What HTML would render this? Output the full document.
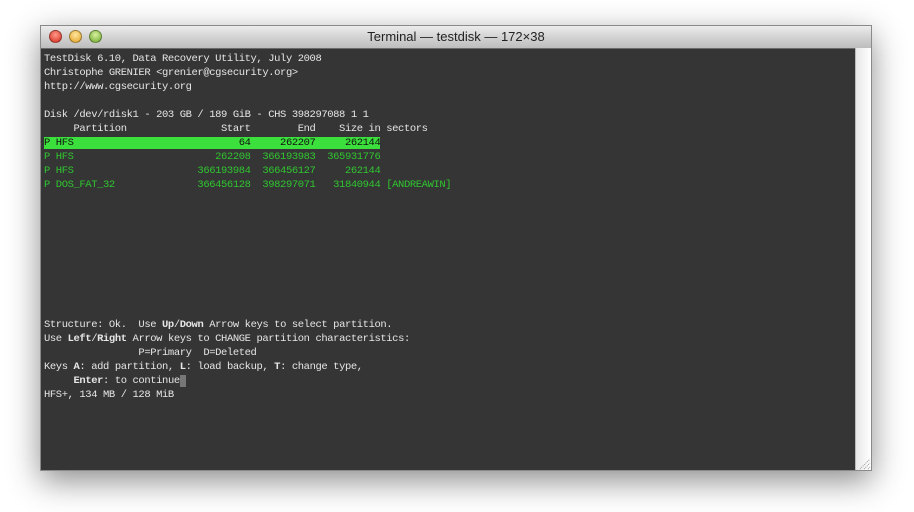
<!DOCTYPE html><html><head><meta charset="utf-8"><style>
body{margin:0;width:914px;height:512px;background:#fff;overflow:hidden;position:relative;font-family:"Liberation Sans",sans-serif}
.win{position:absolute;left:40px;top:25px;width:832px;height:446px;box-shadow:0 10px 30px rgba(0,0,0,.45);border:1px solid #8a8a8a;box-sizing:border-box;background:#353535}
.tb{position:absolute;left:0;top:0;right:0;height:22px;background:linear-gradient(#ececec,#d3d3d3 50%,#bdbdbd);border-bottom:1px solid #6a6a6a;text-align:center;font-size:13px;line-height:22px;color:#222}
.btn{position:absolute;top:4px;width:13px;height:13px;border-radius:50%;border:1px solid rgba(0,0,0,.35);box-sizing:border-box}
.sb{position:absolute;right:0;top:22px;width:15px;bottom:0;background:linear-gradient(90deg,#e8e8e8,#fff);border-left:1px solid #bbb}
pre{position:absolute;left:3px;top:26px;margin:0;font-family:"Liberation Mono",monospace;font-size:10.5px;letter-spacing:-.4px;line-height:14px;color:#e6e6e6}
.g{color:#2fc62f}.h{background:#3ce03c;color:#111}b{font-weight:bold}
.cur{background:#777;color:#777}
</style></head><body>
<div class="win">
<div class="tb">Terminal — testdisk — 172×38
<div class="btn" style="left:8px;background:radial-gradient(circle at 50% 35%,#ff9a8a,#d42a1c)"></div>
<div class="btn" style="left:28px;background:radial-gradient(circle at 50% 35%,#ffe6a0,#e0a020)"></div>
<div class="btn" style="left:48px;background:radial-gradient(circle at 50% 35%,#d8f0a0,#6aa828)"></div>
</div>
<div class="sb"><svg style="position:absolute;bottom:0;right:0" width="14" height="14"><path d="M3 13L13 3M7 13L13 7M11 13L13 11" stroke="#999" stroke-width="1" stroke-dasharray="1 1"/></svg></div>
<pre>TestDisk 6.10, Data Recovery Utility, July 2008
Christophe GRENIER &lt;grenier@cgsecurity.org&gt;
http://www.cgsecurity.org

Disk /dev/rdisk1 - 203 GB / 189 GiB - CHS 398297088 1 1
     Partition                Start        End    Size in sectors
<span class="h">P HFS                            64     262207     262144</span>
<span class="g">P HFS                        262208  366193983  365931776</span>
<span class="g">P HFS                     366193984  366456127     262144</span>
<span class="g">P DOS_FAT_32              366456128  398297071   31840944 [ANDREAWIN]</span>









Structure: Ok.  Use <b>Up</b>/<b>Down</b> Arrow keys to select partition.
Use <b>Left</b>/<b>Right</b> Arrow keys to CHANGE partition characteristics:
                P=Primary  D=Deleted
Keys <b>A</b>: add partition, <b>L</b>: load backup, <b>T</b>: change type,
     <b>Enter</b>: to continue<span class="cur">_</span>
HFS+, 134 MB / 128 MiB</pre>
</div>
</body></html>
